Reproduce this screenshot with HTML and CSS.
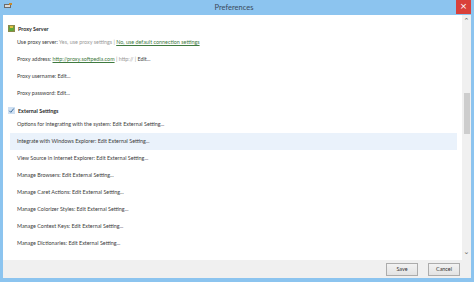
FILE: index.html
```html
<!DOCTYPE html>
<html>
<head>
<meta charset="utf-8">
<link rel="stylesheet" href="styles.css">
</head>
<body>
<div class="window">
  <div class="titlebar">
    <svg class="appicon" width="8" height="6" viewBox="0 0 8 6"><rect x="0" y="1" width="7" height="4" fill="#6b6b6b"/><rect x="1" y="2" width="5" height="2" fill="#d9d9d9"/><rect x="5" y="0" width="3" height="2" fill="#c98a2c"/></svg>
    <div class="title">Preferences</div>
    <div class="close">×</div>
  </div>
  <div class="client">
    <div class="content">
      <div class="list">
        <div class="section">
          <svg class="sicon" width="7" height="7" viewBox="0 0 7 7"><rect x="0" y="0" width="7" height="7" fill="#8a8a4a"/><circle cx="3.5" cy="3.5" r="2.6" fill="#5ea83a"/><rect x="2" y="1" width="3" height="2" fill="#e0c040"/></svg>
          <span>Proxy Server</span>
        </div>
        <div class="row">Use proxy server: <span class="muted">Yes, use proxy settings</span> <span class="muted">|</span> <span class="link">No, use default connection settings</span></div>
        <div class="row">Proxy address: <span class="link">http://proxy.softpedia.com</span> <span class="muted">| http:// |</span> Edit...</div>
        <div class="row">Proxy username: Edit...</div>
        <div class="row">Proxy password: Edit...</div>
        <div class="section sec2">
          <svg class="sicon" width="7" height="7" viewBox="0 0 7 7"><rect x="0" y="0" width="7" height="7" fill="#cfe0f2"/><path d="M1.3 3.8 L2.8 5.3 L5.8 1.5" stroke="#3f6f9f" stroke-width="1" fill="none"/></svg>
          <span>External Settings</span>
        </div>
        <div class="row">Options for integrating with the system: Edit External Setting...</div>
        <div class="row hl">Integrate with Windows Explorer: Edit External Setting...</div>
        <div class="row">View Source in Internet Explorer: Edit External Setting...</div>
        <div class="row">Manage Browsers: Edit External Setting...</div>
        <div class="row">Manage Caret Actions: Edit External Setting...</div>
        <div class="row">Manage Colorizer Styles: Edit External Setting...</div>
        <div class="row">Manage Context Keys: Edit External Setting...</div>
        <div class="row">Manage Dictionaries: Edit External Setting...</div>
      </div>
      <div class="scrollbar">
        <div class="arrow">&#8963;</div>
        <div class="track"><div class="thumb"></div></div>
        <div class="arrow down">&#8964;</div>
      </div>
    </div>
    <div class="footer">
      <button class="btn">Save</button>
      <button class="btn">Cancel</button>
    </div>
  </div>
</div>
</body>
</html>
```
FILE: styles.css
```css
html, body {
  margin: 0;
  padding: 0;
}
body {
  width: 474px;
  height: 282px;
  overflow: hidden;
  font-family: Lato, "Open Sans", sans-serif;
}
.window {
  width: 474px;
  height: 282px;
  background: #8cc4ef;
  display: flex;
  flex-direction: column;
  box-sizing: border-box;
}
.titlebar {
  height: 15px;
  position: relative;
  display: flex;
  align-items: center;
  justify-content: center;
  flex: none;
}
.appicon {
  position: absolute;
  left: 4px;
  top: 3px;
}
.title {
  font-size: 7.5px;
  color: #3a4a5a;
  margin-left: -6px;
}
.close {
  position: absolute;
  right: 3px;
  top: 0;
  width: 15px;
  height: 14px;
  background: #d9403a;
  color: #fff;
  font-size: 9px;
  line-height: 13px;
  text-align: center;
  font-family: "DejaVu Sans", sans-serif;
}
.client {
  flex: 1;
  margin: 0 3px 4px 3px;
  background: #fff;
  display: flex;
  flex-direction: column;
  min-height: 0;
}
.content {
  flex: 1;
  display: flex;
  min-height: 0;
}
.list {
  flex: 1;
  padding: 8px 5px 0 7px;
  font-size: 5.4px;
  color: #3c3c3c;
}
.section {
  display: flex;
  align-items: center;
  gap: 3px;
  height: 11px;
  font-weight: bold;
  color: #2c2c2c;
  margin-left: -2px;
}
.sec2 {
  margin-top: 3px;
}
.sicon {
  flex: none;
}
.row {
  height: 17px;
  line-height: 17px;
  padding-left: 7px;
  white-space: nowrap;
}
.row.hl {
  background: #eaf2fb;
}
.muted {
  color: #9a9a9a;
}
.link {
  color: #3f7a3f;
  text-decoration: underline;
}
.scrollbar {
  width: 9px;
  background: #f0f0f0;
  display: flex;
  flex-direction: column;
  align-items: center;
}
.arrow {
  height: 11px;
  font-size: 7px;
  line-height: 13px;
  color: #606060;
  font-family: "DejaVu Sans", sans-serif;
}
.arrow.down {
  line-height: 7px;
}
.track {
  flex: 1;
  width: 100%;
  display: flex;
  justify-content: center;
}
.thumb {
  width: 6px;
  height: 41px;
  margin-top: 67px;
  background: #cdcdcd;
}
.footer {
  height: 18px;
  flex: none;
  background: #f0f0f0;
  display: flex;
  justify-content: flex-end;
  align-items: center;
  gap: 10px;
  padding-right: 11px;
}
.btn {
  width: 32px;
  height: 13px;
  padding: 0;
  font-family: inherit;
  font-size: 5.4px;
  color: #333;
  border: 1px solid #acacac;
  background: linear-gradient(#f2f2f2, #e3e3e3);
  border-radius: 0;
}
```
